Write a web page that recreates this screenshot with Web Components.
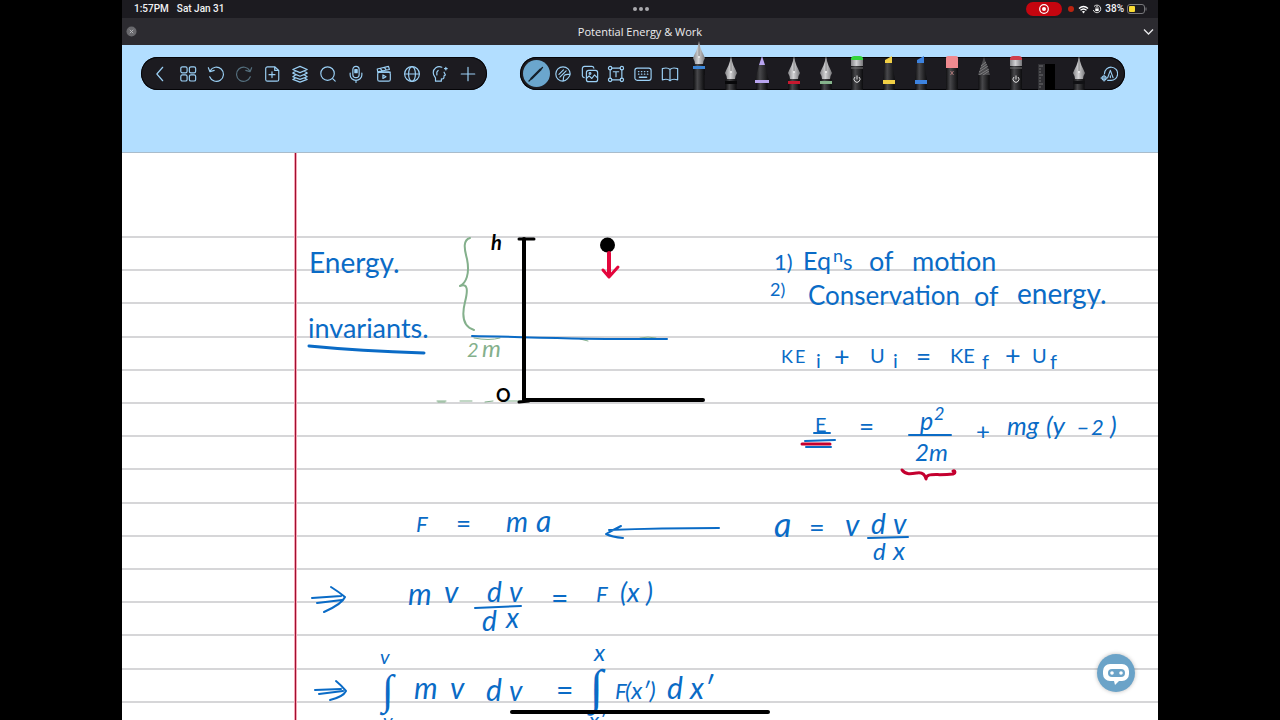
<!DOCTYPE html>
<html lang="en">
<head>
<meta charset="utf-8">
<title>Potential Energy &amp; Work</title>
<style>
  body { margin: 0; background: #000; font-family: Inter, "Liberation Sans", sans-serif; }
</style>
</head>
<body>
<note-app></note-app>

<template id="t-app">
  <style>
    :host { display: block; position: relative; min-height: 100vh; box-sizing: border-box; padding: 0 122px; background: #000; }
    .screen { position: relative; display: flex; flex-direction: column; min-height: 100vh; background: #fff; }
    .desk { background: #b2deff; height: 108px; box-sizing: border-box; padding: 12px 33px 0 19px; display: flex; align-items: flex-start; gap: 33px; border-bottom: 1px solid #a9bccb; }
    .pens { flex: 1; min-width: 0; display: flex; height: 33px; }
    .tools { display: flex; width: 160px; }
    tool-bar.wide { flex: 1; min-width: 0; }
    .home { position: absolute; bottom: 6px; left: 50%; width: 260px; height: 4px; margin-left: -130px; border-radius: 2px; background: #000; }
    assistant-button { position: absolute; right: 23px; bottom: 28px; }
  </style>
  <div class="screen">
    <status-bar></status-bar>
    <title-bar>Potential Energy &amp; Work</title-bar>
    <div class="desk">
      <tool-bar>
        <tool-button name="Back"><svg viewBox="0 0 20 20"><path d="M13 2.500 6.500 10l6.500 7.500"/></svg></tool-button>
        <tool-button name="Pages"><svg viewBox="0 0 20 20"><rect x="2" y="2" width="7" height="6.800" rx="1.800"/><rect x="11.500" y="2" width="7" height="6.800" rx="1.800"/><rect x="2" y="11" width="7" height="6.800" rx="1.800"/><rect x="11.500" y="11" width="7" height="6.800" rx="1.800"/></svg></tool-button>
        <tool-button name="Undo"><svg viewBox="0 0 20 20"><path d="M3.500 6.500A7.900 7.900 0 1 1 3 13M1.500 3l1.800 4.500L8 6"/></svg></tool-button>
        <tool-button name="Redo" dim><svg viewBox="0 0 20 20"><path d="M16.500 6.500A7.900 7.900 0 1 0 17 13M18.500 3l-1.800 4.500L12 6"/></svg></tool-button>
        <tool-button name="Add page"><svg viewBox="0 0 20 20"><path d="M5 2h8L17.500 6v10a2 2 0 0 1-2 2H5a2 2 0 0 1-2-2V4a2 2 0 0 1 2-2zM13 2v4h4M10 7.500v6.500M6.700 10.700h6.600"/></svg></tool-button>
        <tool-button name="Layers"><svg viewBox="0 0 20 20"><path d="M10 1.500 18 5l-8 3.500L2 5zM5 7 2 9l8 3.500L18 9l-3-2M5 11l-3 2 8 3 8-3-3-2M5 14.500 2 16l8 3 8-3-3-1.500"/></svg></tool-button>
        <tool-button name="Search"><svg viewBox="0 0 20 20"><circle cx="9.500" cy="9.500" r="7.500"/><path d="m15.500 15.500 2.500 2.500"/></svg></tool-button>
        <tool-button name="Record audio"><svg viewBox="0 0 20 20"><rect x="6.500" y="1.500" width="7" height="12.500" rx="3.500"/><path d="M3.500 9v2a6.500 6 0 0 0 13 0V9M10 17v2.500M10 5v3.500M8.700 5h2.600v3.500H8.700z"/></svg></tool-button>
        <tool-button name="Video"><svg viewBox="0 0 20 20"><rect x="3" y="8" width="14" height="10" rx="2"/><path d="m3 7.500-.5-3 12.500-3 1 3.500L3 7.500M6 4l2 2.500M10.500 3l2 2.500M3 8h14M8.800 11v4l3.400-2z"/></svg></tool-button>
        <tool-button name="Web"><svg viewBox="0 0 20 20"><circle cx="10" cy="10" r="8.200"/><ellipse cx="10" cy="10" rx="3.800" ry="8.200"/><path d="M2 10h16"/></svg></tool-button>
        <tool-button name="Ideas"><svg viewBox="0 0 20 20"><path d="M12 2.500C7 .5 2.500 4 2.500 8.500c0 3 2 4.500 2.500 6v3.500h6.500v-2.500c3 .5 3-1.500 3-3.500l1.500-.8-1.500-3.200"/><path d="M8 6 6.500 8v3M15 4h3M16.500 2.500v3"/></svg></tool-button>
        <tool-button name="Add"><svg viewBox="0 0 20 20"><path d="M10 2.500v15M2.500 10h15"/></svg></tool-button>
      </tool-bar>
      <tool-bar class="wide" snug>
        <div class="tools">
          <tool-button name="Pen" active fit><svg viewBox="0 0 20 20"><path d="m5.500 14.500 9-9" stroke="#15202a" stroke-width="2.400"/><path d="m3 17 2-2M15.500 4.500l1-1" stroke="#15202a"/></svg></tool-button>
          <tool-button name="Sticker" fit><svg viewBox="0 0 20 20"><path d="M18 10A8 8 0 1 0 10 18M18 10c0 3-5 8-8 8 1-2-.5-5 2-7 1.500-1 4.500 0 6-1zM5.500 10.500l5-5M6.500 13.500l7-7"/></svg></tool-button>
          <tool-button name="Images" fit><svg viewBox="0 0 20 20"><rect x="6" y="6" width="12.500" height="12.500" rx="2.500"/><path d="M3.500 14c-1-.3-2-1-2-2V4A2.500 2.500 0 0 1 4 1.500h8c1 0 2 .5 2.300 2M6 15l3-3 3 3 3-4 3 3"/><circle cx="10" cy="9.500" r="1"/></svg></tool-button>
          <tool-button name="Text box" fit><svg viewBox="0 0 20 20"><path d="M5 3.500h10M5 16.500h10M3.500 5v10M16.500 5v10M7 7.500h6M10 7.500V13"/><circle cx="3.500" cy="3.500" r="1.900"/><circle cx="16.500" cy="3.500" r="1.900"/><circle cx="3.500" cy="16.500" r="1.900"/><circle cx="16.500" cy="16.500" r="1.900"/></svg></tool-button>
          <tool-button name="Keyboard" fit><svg viewBox="0 0 20 20"><rect x="1" y="3.500" width="18" height="13.500" rx="2.500"/><path d="M5 7.300h11.500M5 10.200h11.500" stroke-width="1.500" stroke-dasharray=".4 2.900"/><path d="M6 13.700h8" stroke-width="1.600"/></svg></tool-button>
          <tool-button name="Read" fit><svg viewBox="0 0 20 20"><path d="M10 5C8 3 5 3 1.500 4v12.500c3.500-1 6.500-1 8.500 1 2-2 5-2 8.500-1V4C15 3 12 3 10 5zM10 5v12.500"/></svg></tool-button>
        </div>
        <div class="pens">
          <pen-tool kind="nib" tint="#3b84d4" name="Blue pen" raised></pen-tool>
          <pen-tool kind="nib" tint="#08080a" name="Black pen"></pen-tool>
          <pen-tool kind="fine" tint="#b9a5f0" name="Lilac fineliner"></pen-tool>
          <pen-tool kind="nib" tint="#c6192f" name="Red pen"></pen-tool>
          <pen-tool kind="nib" tint="#86b48c" name="Green pen"></pen-tool>
          <pen-tool kind="cap" tint="#35d43c" name="Green laser"></pen-tool>
          <pen-tool kind="marker" tint="#f0cf45" name="Yellow highlighter"></pen-tool>
          <pen-tool kind="marker" tint="#3d83e0" name="Blue highlighter"></pen-tool>
          <pen-tool kind="eraser" tint="#f08a90" name="Eraser"></pen-tool>
          <pen-tool kind="cone" tint="#77777a" name="Lasso"></pen-tool>
          <pen-tool kind="cap" tint="#cf3f4c" name="Red laser"></pen-tool>
          <pen-tool kind="ruler" tint="#000" name="Ruler"></pen-tool>
          <pen-tool kind="nib" tint="#111114" name="Spare pen"></pen-tool>
        </div>
        <tool-button name="Add tool" narrow><svg viewBox="0 0 20 20"><path d="M5 9.500A7.300 7.300 0 1 1 11.500 17H8.500"/><path d="m8.500 14 3-8 3 8M11.500 12v2"/><circle cx="4.500" cy="14.500" r="2.300"/><path d="M4.500 11v7M1 14.500h7" stroke-width="1"/></svg></tool-button>
      </tool-bar>
    </div>
    <note-paper></note-paper>
    <assistant-button></assistant-button>
    <div class="home"></div>
  </div>
</template>

<template id="t-status">
  <style>
    :host { display: flex; align-items: center; height: 18px; background: #1c1b20; color: #f2f2f4; font: 500 10px/18px Roboto, sans-serif; padding: 0 11px 0 12px; }
    .side { flex: 1; display: flex; align-items: center; gap: 8px; }
    .end { justify-content: flex-end; gap: 3px; }
    button { border: 0; margin: 0; padding: 0; background: none; display: flex; align-items: center; justify-content: center; height: 14px; }
    .dots { width: 16px; }
    .rec { width: 36px; background: #c4050f; border-radius: 7px; margin-right: 3px; }
    svg { display: block; }
  </style>
  <div class="side"><span>1:57PM</span><span>Sat Jan 31</span></div>
  <button class="dots" aria-label="Multitasking"><svg width="16" height="4"><g fill="#a9a9ad"><circle cx="2" cy="2" r="2"/><circle cx="8" cy="2" r="2"/><circle cx="14" cy="2" r="2"/></g></svg></button>
  <div class="side end">
    <button class="rec" aria-label="Stop screen recording"><svg width="12" height="12"><circle cx="6" cy="6" r="4.300" fill="none" stroke="#fff" stroke-width="1.200"/><circle cx="6" cy="6" r="2" fill="#fff"/></svg></button>
    <svg width="7" height="8"><circle cx="3" cy="4" r="3" fill="#bb2410"/></svg>
    <svg width="11" height="9" viewBox="0 0 11 9"><path d="M1 3.500q4.500-4 9 0M2.500 5.300q3-2.600 6 0" fill="none" stroke="#fff" stroke-width="1.400"/><path d="M3.900 6.600q1.600-1.300 3.200 0L5.500 8.600z" fill="#fff"/></svg>
    <svg width="10" height="10" viewBox="0 0 10 10"><path d="M2 2.500A3.800 3.800 0 1 1 1.300 6" fill="none" stroke="#ddd"/><rect x="3.300" y="4.500" width="3.400" height="2.600" fill="#fff"/><path d="M4 4.500V3.500a1 1 0 0 1 2 0v1" fill="none" stroke="#fff" stroke-width=".7"/></svg>
    <span>38%</span>
    <svg width="20" height="10" viewBox="0 0 20 10"><rect x=".5" y=".5" width="17" height="9" rx="2.500" fill="none" stroke="#77777b"/><path d="M19 3.500v3" stroke="#77777b"/><rect x="2" y="2" width="6" height="6" rx="1" fill="#fadb35"/></svg>
  </div>
</template>

<template id="t-title">
  <style>
    :host { display: flex; align-items: center; height: 27px; background: #2c2b30; color: #ececee; font: 11px/27px "Open Sans", sans-serif; padding: 0 4px; }
    h1 { flex: 1; margin: 0; text-align: center; font: inherit; }
    button { border: 0; margin: 0; padding: 0; background: none; display: flex; }
  </style>
  <button aria-label="Close tab"><svg width="11" height="11"><circle cx="5.500" cy="5.500" r="5" fill="#69696d"/><path d="m3.800 3.800 3.400 3.400M7.200 3.800 3.800 7.200" stroke="#bcbcc0" stroke-width=".9"/></svg></button>
  <h1><slot></slot></h1>
  <button aria-label="More"><svg width="11" height="8"><path d="m1 1.500 4.500 4.500L10 1.500" fill="none" stroke="#e8e8ea" stroke-width="1.300"/></svg></button>
</template>

<template id="t-bar">
  <style>
    :host { display: flex; height: 33px; box-sizing: border-box; padding: 0 5px; border-radius: 17px; background: #1c1b20; box-shadow: inset 0 0 0 1px #050508; }
    :host([snug]) { padding: 0 3px; }
  </style>
  <slot></slot>
</template>

<template id="t-button">
  <style>
    :host { display: flex; align-items: center; justify-content: center; width: 28px; color: #9bd0f5; }
    :host([narrow]) { width: 27px; }
    :host([fit]) { flex: 1; width: auto; min-width: 0; }
    :host([dim]) { color: #55707f; }
    button { border: 0; margin: 0; padding: 0; background: none; color: inherit; width: 27px; height: 27px; border-radius: 14px; display: flex; flex: none; align-items: center; justify-content: center; }
    :host([active]) button { background: #6ba6cd; }
    ::slotted(svg) { width: 18px; height: 18px; fill: none; stroke: currentColor; stroke-width: 1.3; stroke-linecap: round; stroke-linejoin: round; }
    :host([active]) ::slotted(svg) { width: 20px; height: 20px; }
  </style>
  <button><slot></slot></button>
</template>

<template id="t-assistant">
  <style>
    :host { display: block; }
    button { border: 0; margin: 0; padding: 0; width: 38px; height: 38px; border-radius: 19px; background: #6ba3c8; box-shadow: 0 0 4px #0004; display: block; }
    svg { display: block; }
  </style>
  <button aria-label="Assistant"><svg width="38" height="38"><path d="M13 10h12a7 7 0 0 1 7 7v3a7 7 0 0 1-7 7h-3l-4 4-1-4h-4a7 7 0 0 1-7-7v-3a7 7 0 0 1 7-7z" fill="#fff"/><rect x="11" y="15" width="17" height="8" rx="4" fill="#6ba3c8"/><circle cx="15" cy="19" r="1.800" fill="#fff"/><circle cx="24" cy="19" r="1.800" fill="#fff"/></svg></button>
</template>

<template id="t-paper">
  <style>
    :host { display: block; flex: 1; background: #fff; overflow: hidden; }
    svg { display: block; width: 100%; height: auto; }
    text { font-family: Lato, "Liberation Sans", sans-serif; fill: #0a6bc6; }
    .m { font-style: italic; }
    .int { font-family: "Liberation Serif", serif; font-style: italic; }
    .k { fill: #000; font-weight: 700; }
    .g { fill: #84b08c; }
    .rule { stroke: #d6d6d8; stroke-width: 2; }
    .ink path { fill: none; stroke: #0a6bc6; stroke-width: 2; stroke-linecap: round; stroke-linejoin: round; }
    .ink .black { stroke: #000; stroke-width: 4; }
    .ink .thin { stroke-width: 3; }
    .ink .green { stroke: #84b08c; }
    .ink .faint { stroke-width: 1; }
    .ink .red { stroke: #c4002f; stroke-width: 3; }
    .ink .bright { stroke: #e3063c; stroke-width: 4; }
  </style>
  <svg viewBox="122 153 1036 567" role="img" aria-label="Handwritten notes">
    <g class="rules"></g>
    <path d="M295.500 153V720" stroke="#f5a5b5" stroke-width="3"/>
    <path d="M295.500 153V720" stroke="#a01030"/>
    <g class="ink">
      <path d="M309 346Q360 351 424 353" class="thin"/>
      <path class="green" d="M470 238C463 240 464 248 467 259C470 274 466 283 460 286C468 283 468 290 465 302C461 318 464 327 474 330"/>
      <path class="green faint" d="M437 401h9M460 401h12M485 402l8-1M505 401h16M438 402h7M474 338q15 3 26 0M580 339l8 2M640 338q8-2 16 0"/>
      <path d="M472 336C520 337 590 339 620 339L667 339"/>
      <path class="black" d="M524 239V400L703 400"/>
      <path class="black thin" d="M519 239h15M519 402l10-1"/>
      <ellipse cx="607.500" cy="245" rx="7.500" ry="7.500" fill="#000"/>
      <path class="red bright" d="M609 253V275"/>
      <path class="red" style="stroke:#e3063c" d="M603 270l6 7 9-10"/>
      <path d="M814 433h16M805 441l30-1M806 447h25"/>
      <path class="red" d="M802 444l28 0" />
      <path d="M909 435h42M868 538l40-1M475 608l46-2"/>
      <path class="red" d="M902 470C906 475 911 474 917 473C923 472 925 475 926 479C926 472 936 476 953 474C956 473 955 470 953 471"/>
      <path d="M719 528Q660 528 609 530M621 526Q613 530 606 534Q612 537 623 538"/>
      <path d="M312 598l29-2M317 603l25-3M331 587q8 5 14 10q-3 7-21 15"/>
      <path d="M315 690l26-1M319 694l24-3M336 681q5 4 10 10q-3 6-16 9"/>
    </g>
    <g class="words"></g>
  </svg>
</template>

<script>
  const define = (tag, id, setup) => customElements.define(tag, class extends HTMLElement {
    connectedCallback() {
      if (this.shadowRoot) return;
      const root = this.attachShadow({ mode: 'open' });
      root.append(document.getElementById(id).content.cloneNode(true));
      if (setup) setup(root, this);
    }
  });

  // Position, baseline, size, class and content of each word on the page.
  const words = [
    [309, 273, 28, '', 'Energy.'], [308, 338, 27, '', 'invariants.'],
    [491, 250, 20, 'k m', 'h'], [496, 402, 18, 'k', 'O'],
    [467, 357, 20, 'g m', '2'], [482, 357, 24, 'g m', 'm'],
    [774, 270, 22, '', '1)'], [803, 270, 25, '', 'Eq'], [833, 262, 18, '', 'n'], [843, 270, 22, '', 's'],
    [869, 271, 27, '', 'of'], [912, 271, 27, '', 'motion'],
    [770, 296, 18, '', '2)'], [808, 305, 26, '', 'Conservation'], [974, 306, 27, '', 'of'], [1017, 304, 28, '', 'energy.'],
    [781, 363, 18, '', 'K'], [795, 363, 18, '', 'E'], [816, 368, 20, '', 'i'], [834, 366, 27, '', '+'],
    [870, 363, 20, '', 'U'], [893, 368, 20, '', 'i'], [916, 366, 26, '', '='],
    [950, 363, 20, '', 'KE'], [982, 369, 20, '', 'f'], [1005, 365, 27, '', '+'], [1032, 363, 20, '', 'U'], [1050, 369, 20, '', 'f'],
    [815, 432, 20, '', 'E'], [859, 436, 26, '', '='], [920, 430, 25, 'm', 'p'], [934, 420, 18, 'm', '2'],
    [915, 461, 24, 'm', '2m'], [976, 440, 24, '', '+'], [1007, 435, 25, 'm', 'mg'], [1046, 435, 26, 'm', '(y'], [1076, 435, 24, 'm', '–'], [1091, 435, 22, 'm', '2'], [1110, 435, 26, 'm', ')'],
    [416, 532, 22, 'm', 'F'], [456, 533, 26, '', '='], [506, 532, 28, 'm', 'm'], [536, 532, 30, 'm', 'a'],
    [774, 537, 34, 'm', 'a'], [809, 537, 27, '', '='], [845, 536, 30, 'm', 'v'], [871, 534, 28, 'm', 'd'], [893, 534, 28, 'm', 'v'],
    [873, 560, 24, 'm', 'd'], [893, 560, 26, 'm', 'x'],
    [408, 605, 30, 'm', 'm'], [444, 603, 30, 'm', 'v'], [487, 602, 28, 'm', 'd'], [509, 602, 28, 'm', 'v'],
    [482, 631, 28, 'm', 'd'], [506, 628, 28, 'm', 'x'], [551, 609, 30, '', '='], [596, 602, 22, 'm', 'F'], [620, 602, 27, 'm', '(x'], [646, 602, 27, 'm', ')'],
    [380, 664, 20, 'm', 'v'], [382, 704, 42, 'int', '∫'], [414, 699, 30, 'm', 'm'], [450, 699, 30, 'm', 'v'], [486, 701, 30, 'm', 'd'], [509, 701, 28, 'm', 'v'],
    [556, 701, 30, '', '='], [594, 661, 24, 'm', 'x'], [590, 703, 48, 'int', '∫'],
    [615, 699, 22, 'm', 'F'], [625, 699, 24, 'm', '(x′)'], [667, 699, 30, 'm', 'd'], [690, 699, 30, 'm', 'x′'],
    [383, 728, 20, 'm', 'v'], [589, 728, 22, 'm', 'x′']
  ];

  define('status-bar', 't-status');
  define('title-bar', 't-title');
  define('tool-bar', 't-bar');
  define('tool-button', 't-button', (root, el) => root.querySelector('button').setAttribute('aria-label', el.getAttribute('name')));
  define('assistant-button', 't-assistant');
  define('note-paper', 't-paper', root => {
    let lines = '';
    for (let i = 0; i < 15; i++) {
      const y = Math.round(237 + i * 33.2);
      lines += `<path class="rule" d="M122 ${y}H1158"/>`;
    }
    root.querySelector('.rules').innerHTML = lines;
    root.querySelector('.words').innerHTML = words.map(([x, y, size, cls, t]) =>
      `<text x="${x}" y="${y}" font-size="${size}" class="${cls}">${t}</text>`).join('');
  });

  const body = (y, w) => `<rect x="${16 - w / 2}" y="${y}" width="${w}" height="${50 - y}" fill="url(#b)"/>`;
  const drawings = {
    nib: c => `<path d="M16 16C17 24 20 28 22 33Q20 36 20 39H12Q12 36 10 33C12 28 15 24 16 16z" fill="url(#s)"/><path d="M16 20v11" stroke="#666" stroke-width=".7"/><circle cx="16" cy="32" r="1" fill="#eee"/>${body(39, 11)}<rect x="10" y="41" width="12" height="3" fill="${c}"/>`,
    fine: c => `<path d="M16 16l3 9h-6z" fill="${c}"/><path d="M13 25h6l4 16H9z" fill="url(#b)"/>${body(41, 11)}<rect x="9" y="40" width="14" height="3" fill="${c}"/>`,
    cap: c => `<path d="M10 21v-3q1-2 3-2h6q2 0 3 2v3z" fill="${c}"/><rect x="10" y="20" width="12" height="6" fill="url(#s)"/>${body(26, 12)}<path d="M10 28h12" stroke="#777"/><path d="M14 37a3 3 0 1 0 4 0M16 35.500v4" fill="none" stroke="#ddd"/>`,
    marker: c => `<path d="M12 23v-3l7-4v7z" fill="${c}"/><path d="M12 23h7l3 17H10z" fill="url(#b)"/>${body(40, 11)}<rect x="10" y="40" width="12" height="4" fill="${c}"/>`,
    eraser: c => `<path d="M10 28V18q0-2 2-2h8q2 0 2 2v10z" fill="${c}"/>${body(28, 12)}<path d="m14.500 31 3 4m0-4-3 4" stroke="#a77"/>`,
    cone: c => `<path d="M16 17l6 18H10z" fill="#4a4a4d"/><path d="M13 26l5-4M12 29l7-5M11 32l9-6M11 35l10-6M15 35l6-4" stroke="#8a8a8d" stroke-width=".8"/>${body(35, 11)}`,
    ruler: c => `<rect x="7" y="24" width="7" height="26" fill="#303034"/><path d="M8 26h4M8 29h2M8 32h2M8 35h4M8 38h2M8 41h2M8 44h4M8 47h2" stroke="#8a8a8d" stroke-width=".7"/><rect x="14" y="24" width="10" height="26" fill="${c}"/>`
  };

  customElements.define('pen-tool', class extends HTMLElement {
    connectedCallback() {
      const root = this.attachShadow({ mode: 'open' });
      const raised = this.hasAttribute('raised');
      const drawing = drawings[this.getAttribute('kind')](this.getAttribute('tint'));
      root.innerHTML = `
        <style>
          :host { display: flex; flex: 1; min-width: 0; height: 33px; }
          button { flex: 1; min-width: 0; border: 0; margin: 0; padding: 0; background: none; display: flex; align-items: flex-end; justify-content: center; }
          svg { display: block; flex: none; }
        </style>
        <button aria-label="${this.getAttribute('name')}">
          <svg width="32" height="50" viewBox="0 0 32 50">
            <defs>
              <linearGradient id="b"><stop offset="0" stop-color="#101012"/><stop offset=".35" stop-color="#48484b"/><stop offset="1" stop-color="#0c0c0e"/></linearGradient>
              <linearGradient id="s"><stop offset="0" stop-color="#858588"/><stop offset=".45" stop-color="#d2d2d4"/><stop offset="1" stop-color="#77777a"/></linearGradient>
            </defs>
            ${raised ? `<g transform="translate(0 -15)">${drawing}</g>${body(29, 11)}` : drawing}
          </svg>
        </button>`;
    }
  });
  define('note-app', 't-app');
</script>
</body>
</html>
